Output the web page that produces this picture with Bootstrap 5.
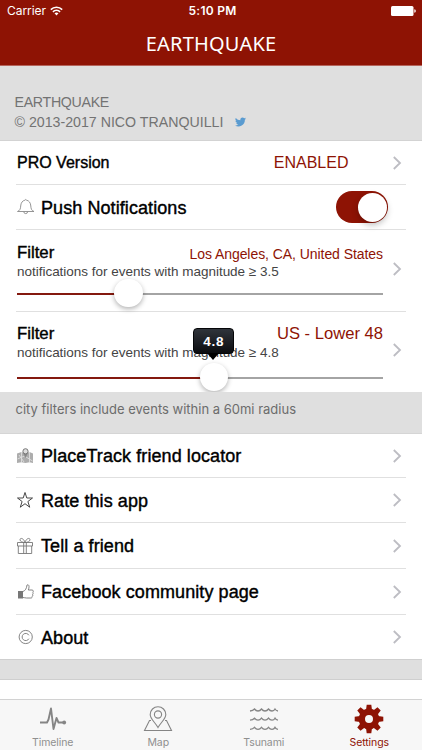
<!DOCTYPE html>
<html lang="en">
<head>
<meta charset="utf-8">
<meta name="viewport" content="width=device-width, initial-scale=1">
<title>Earthquake settings</title>
<link href="https://cdn.jsdelivr.net/npm/bootstrap@5.3.0/dist/css/bootstrap.min.css" rel="stylesheet">
<style>
:root{--brand:#8e1304;--band:#dfdfdf}
html,body{height:100%;overflow:hidden}
body{font-family:"Liberation Sans",Arial,sans-serif;color:#000;line-height:1}
.screen{width:422px;height:750px}
.ui{font-family:Inter,Roboto,sans-serif}
.top{height:66px;background:var(--brand);border-bottom:1px solid #b5645b}
.status{height:22px;padding:0 6px 0 7px;font-size:12px}
.carrier{letter-spacing:-.05px}
.clock{font-weight:600;letter-spacing:.25px;padding-left:2px}
.brand-title{font:400 20px/26px "Noto Sans",sans-serif;padding-top:9px;letter-spacing:.2px}
.band{background:var(--band);color:#737373}
.credits{height:75px;padding:26px 14px 0 14.5px;font-size:14.2px;line-height:20px;letter-spacing:-.3px;border-bottom:1px solid #d3d3d3}
.owner{letter-spacing:0}
.rows{padding-left:16px;padding-right:16px}
.entry{border-bottom:1px solid #e0e0e0;padding:0 4px 0 1px}
.entry:last-child{border-bottom:0}
.strong-text{-webkit-text-stroke:.4px #000}
.label18{font-size:18px;letter-spacing:.08px;padding-top:1.5px}
.label16{font-size:16px;padding-top:1px}
.red{color:var(--brand)}
.state{margin-right:43.5px}
.place-a{font-size:14px;letter-spacing:-.06px;padding-top:2px}
.place-b{font-size:16.6px}
.ico{width:18px;height:18px;margin-right:6px;flex:none}
.chev{width:10px;height:16px;flex:none}
.toggle{width:52px;height:32px;border-radius:16px;background:var(--brand);padding:1.5px;margin-right:14px}
.toggle i{width:29px;height:29px;border-radius:50%;background:#fff;box-shadow:0 3px 6px rgba(0,0,0,.25)}
.filter-a{height:82px;padding-top:15px}
.filter-b{height:80px;padding-top:14px}
.filter-a .track{margin-top:13px}
.filter-b .track{margin-top:16px}
.sub{font-size:13.5px;line-height:16px;color:#444;letter-spacing:-.02px}
.filter-body{width:366px}
.filter-head{height:19px}
.filter-name{font-size:16.8px}
.track{height:2px;background:#a4a4a4}
.fill{height:2px;background:#84190f}
.knob{width:28.5px;height:28.5px;border-radius:50%;background:#fff;box-shadow:0 2px 5px rgba(0,0,0,.3);right:-14px;top:-14.5px}
.bubble{right:-20px;top:-49px;width:41px;height:26px;border-radius:4px;background:linear-gradient(#30343b,#0b0c0f);border:1px solid #050608;color:#fff;font-weight:700;font-size:13.5px;letter-spacing:.8px;padding-top:1px;z-index:2}
.bubble::after{content:"";position:absolute;top:24px;left:13px;border:6px solid transparent;border-top:7px solid #000;border-bottom:0}
.note{height:42px;padding:10.5px 15.5px;font-size:13px;color:#6c6c6c;border-bottom:1px solid #d5d5d5}
.gap-band{height:21px;border-top:1px solid #cfcfcf;border-bottom:1px solid #cfcfcf}
.tabs{height:51px;background:#f7f7f7;border-top:1px solid #d2d2d2;color:#8f8f8f;font-size:10.5px}
.tabs svg{width:32px;height:32px;margin-top:3px}
.tabs span{margin-top:3px;letter-spacing:-.1px}
</style>
</head>
<body>
<svg class="d-none"><defs>
<symbol id="chev" viewBox="0 0 10 16"><path d="M1.8 2 8 8l-6.200 6" fill="none" stroke="#bdbdc3" stroke-width="1.8"/></symbol>
</defs></svg>
<div class="screen d-flex flex-column overflow-hidden bg-white">
 <header class="top text-white flex-shrink-0">
  <div class="status ui row g-0 align-items-center">
   <div class="col d-flex align-items-center gap-1"><span class="carrier">Carrier</span>
    <svg width="13" height="10" viewBox="0 0 13 10"><g fill="none" stroke="#fff" stroke-width="1.6"><path d="M.8 3.600a8.200 8.200 0 0 1 11.400 0M2.900 5.800a5.200 5.200 0 0 1 7.200 0"/></g><path d="M4.500 7.300a3 3 0 0 1 4 0l-2 2.200z" fill="#fff"/></svg></div>
   <div class="col-auto clock">5:10 PM</div>
   <div class="col d-flex justify-content-end"><svg width="25" height="10" viewBox="0 0 25 10"><rect width="22.500" height="10" rx="1.500" fill="#fff"/><path d="M23.300 3.200q1.500 .3 1.500 1.800t-1.500 1.800z" fill="#fff"/></svg></div>
  </div>
  <div class="brand-title text-center">EARTHQUAKE</div>
 </header>
 <section class="band credits flex-shrink-0">
  <div>EARTHQUAKE</div>
  <div class="d-flex align-items-center"><span class="owner">© 2013-2017 NICO TRANQUILLI</span>
   <svg class="ms-2 ps-1" width="15" height="10" viewBox="0 0 24 20"><path fill="#5a9bd0" d="M24 2.400a9.800 9.800 0 0 1-2.800.8A5 5 0 0 0 23.300.5a10 10 0 0 1-3.100 1.200A4.900 4.900 0 0 0 11.800 6.200 14 14 0 0 1 1.700 1a4.900 4.900 0 0 0 1.500 6.600A5 5 0 0 1 1 7v.1a4.900 4.900 0 0 0 4 4.800 5 5 0 0 1-2.300.1 4.900 4.900 0 0 0 4.600 3.400A10 10 0 0 1 0 17.500a14 14 0 0 0 21.500-12.500A10 10 0 0 0 24 2.400z"/></svg></div>
 </section>
 <section class="rows flex-shrink-0">
  <div class="entry d-flex align-items-center" style="height:44px">
   <span class="label16 strong-text me-auto">PRO Version</span><span class="label16 red state">ENABLED</span>
   <svg class="chev"><use href="#chev"/></svg>
  </div>
  <div class="entry d-flex align-items-center" style="height:45px">
   <svg class="ico" viewBox="0 0 18 18"><g fill="none" stroke="#8a8a8a" stroke-width=".9"><path d="M.5 13.500c2.700-1 3-3 3.200-5.500C3.900 4.700 5.500 2.700 7.900 2.200a1 1 0 0 1 1.700 0c2.400.5 4 2.500 4.200 5.800.2 2.500.5 4.500 3.200 5.500zM6.800 13.700a1.900 1.900 0 0 0 3.800 0"/></g></svg>
   <span class="label18 strong-text me-auto">Push Notifications</span>
   <div class="toggle d-flex justify-content-end"><i></i></div>
  </div>
  <div class="entry filter-a d-flex">
   <div class="filter-body me-auto">
    <div class="filter-head d-flex justify-content-between"><span class="filter-name strong-text">Filter</span><span class="red place-a">Los Angeles, CA, United States</span></div>
    <div class="sub">notifications for events with magnitude ≥ 3.5</div>
    <div class="track"><div class="fill position-relative" style="width:30.6%"><div class="knob position-absolute"></div></div></div>
   </div>
   <svg class="chev mt-3"><use href="#chev"/></svg>
  </div>
  <div class="entry filter-b d-flex">
   <div class="filter-body me-auto">
    <div class="filter-head d-flex justify-content-between"><span class="filter-name strong-text">Filter</span><span class="red place-b">US - Lower 48</span></div>
    <div class="sub">notifications for events with magnitude ≥ 4.8</div>
    <div class="track"><div class="fill position-relative" style="width:53.9%"><div class="bubble position-absolute d-flex align-items-center justify-content-center">4.8</div><div class="knob position-absolute"></div></div></div>
   </div>
   <svg class="chev mt-3"><use href="#chev"/></svg>
  </div>
 </section>
 <section class="band note ui flex-shrink-0 position-relative">city filters include events within a 60mi radius</section>
 <section class="rows flex-shrink-0">
  <div class="entry d-flex align-items-center" style="height:44px">
   <svg class="ico" viewBox="0 0 18 18"><path d="M0 6.500 4.500 5l4 1.500L12.500 5l3.500 1.500v9.500l-3.500-.8-4 .8-4-.8-4.500.8z" fill="#adadad"/><path d="M4.500 5v10M.5 12l7-3 8 5M12.500 5v10M2 8l5 7" stroke="#dedede" stroke-width=".9" fill="none"/><path d="M5.800 5.500 8.500 11l2.700-5.500z" fill="#888"/><circle cx="8.500" cy="4.300" r="2.600" fill="#ddd" stroke="#777"/></svg>
   <span class="label18 strong-text me-auto">PlaceTrack friend locator</span><svg class="chev"><use href="#chev"/></svg>
  </div>
  <div class="entry d-flex align-items-center" style="height:45px">
   <svg class="ico" viewBox="0 0 18 18"><path d="M8 1.500 9.800 7h5.700l-4.600 3.500 1.800 5.700L8 12.700l-4.700 3.500 1.800-5.700L.5 7h5.700z" fill="none" stroke="#333" stroke-width=".9"/></svg>
   <span class="label18 strong-text me-auto">Rate this app</span><svg class="chev"><use href="#chev"/></svg>
  </div>
  <div class="entry d-flex align-items-center" style="height:46px">
   <svg class="ico" viewBox="0 0 18 18"><g fill="none" stroke="#777" stroke-width=".9"><path d="M.5 5.500h15v3.500H.5zM1.300 9v7.500h13.400V9M6.700 5.500v11M9.300 5.500v11M8 5.500C5.500 5.500 3 4.500 3 2.700c0-2 3.500-2 5 2.800C9.500.7 13 .7 13 2.700c0 1.800-2.500 2.800-5 2.800z"/></g></svg>
   <span class="label18 strong-text me-auto">Tell a friend</span><svg class="chev"><use href="#chev"/></svg>
  </div>
  <div class="entry d-flex align-items-center" style="height:46px">
   <svg class="ico" viewBox="0 0 18 18"><path d="M1 8h5v7.500H1z" fill="#777"/><path d="M6 8.500C8.500 7.500 9.500 5.500 10 2c2-1 2.700 1.500 1.300 5H15c1.500 0 1.700 1.700.7 2.200.8.700.6 1.800-.2 2.100.6.700.4 1.700-.4 2 .3 1-.2 1.700-1.200 1.700H9.500C8 15 7.500 14.500 6 14.500" fill="none" stroke="#777" stroke-width=".9"/></svg>
   <span class="label18 strong-text me-auto">Facebook community page</span><svg class="chev"><use href="#chev"/></svg>
  </div>
  <div class="entry d-flex align-items-center" style="height:44px">
   <svg class="ico" viewBox="0 0 18 18"><g fill="none" stroke="#777" stroke-width=".9"><circle cx="8.700" cy="9" r="6.600"/><path d="M11.900 7.300a3.600 3.600 0 1 0 0 3.400"/></g></svg>
   <span class="label18 strong-text me-auto">About</span><svg class="chev"><use href="#chev"/></svg>
  </div>
 </section>
 <div class="band gap-band flex-shrink-0"></div>
 <nav class="tabs ui row g-0 mt-auto text-center flex-shrink-0">
  <div class="col d-flex flex-column align-items-center"><svg viewBox="0 0 32 32"><path d="M3 19.500h7l1.500-3 2.500-11 2.500 20.500 3-11 2 4.500h5.500" fill="none" stroke="#858585" stroke-width="1.900" stroke-linejoin="round"/><circle cx="27.200" cy="19.500" r="1.900" fill="#858585"/></svg><span>Timeline</span></div>
  <div class="col d-flex flex-column align-items-center"><svg viewBox="0 0 32 32"><g fill="none" stroke="#858585" stroke-width="1.100"><path d="M16 24.500C13 19 8.200 16 8.200 11.500a7.800 7.800 0 0 1 15.600 0C23.800 16 19 19 16 24.500z"/><circle cx="16" cy="11.500" r="3.600"/><path d="M9 17.500H7.500L2.500 27.500h27L24.500 17.500H23"/></g></svg><span>Map</span></div>
  <div class="col d-flex flex-column align-items-center"><svg viewBox="0 0 32 32"><g fill="none" stroke="#858585" stroke-width="1.300"><path id="wv" d="M2 8q3-.3 4.500-2 1.500 2 3.500 2t3.500-2q1.500 2 3.500 2t3.500-2q1.500 2 3.500 2t3-2q1 1.700 3 2"/><use href="#wv" y="9.200"/><use href="#wv" y="18.400"/></g></svg><span>Tsunami</span></div>
  <div class="col d-flex flex-column align-items-center red"><svg viewBox="-16 -16 32 32"><g fill="#8e1304"><g id="tooth"><path d="M-3-9-2.300-14.300h4.600L3-9zM-3 9-2.300 14.300h4.600L3 9z"/></g><use href="#tooth" transform="rotate(45)"/><use href="#tooth" transform="rotate(90)"/><use href="#tooth" transform="rotate(135)"/></g><circle r="7.200" fill="none" stroke="#8e1304" stroke-width="6.400"/></svg><span>Settings</span></div>
 </nav>
</div>
<script src="https://cdn.jsdelivr.net/npm/bootstrap@5.3.0/dist/js/bootstrap.bundle.min.js"></script>
</body>
</html>
